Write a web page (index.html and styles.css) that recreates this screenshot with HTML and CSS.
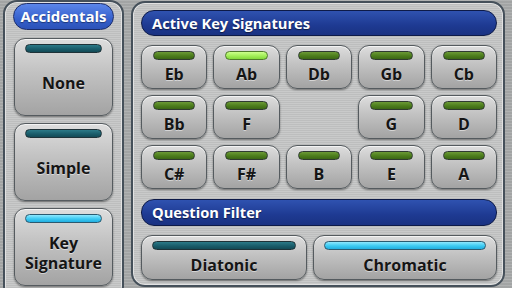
FILE: index.html
```html
<!DOCTYPE html>
<html lang="en">
<head>
    <meta charset="UTF-8">
    <title>Key Signatures</title>
    <link rel="stylesheet" href="styles.css">
</head>
<body>
    <div class="screen">
        <div class="panel left">
            <div class="pill">Accidentals</div>
            <button class="btn tall"><span class="bar teal"></span><span class="label">None</span></button>
            <button class="btn tall"><span class="bar teal"></span><span class="label">Simple</span></button>
            <button class="btn tall"><span class="bar cyan"></span><span class="label">Key<br>Signature</span></button>
        </div>

        <div class="panel right">
            <div class="header">Active Key Signatures</div>
            <div class="keys">
                <button class="btn key"><span class="bar green"></span><span class="label">Eb</span></button>
                <button class="btn key"><span class="bar lime"></span><span class="label">Ab</span></button>
                <button class="btn key"><span class="bar green"></span><span class="label">Db</span></button>
                <button class="btn key"><span class="bar green"></span><span class="label">Gb</span></button>
                <button class="btn key"><span class="bar green"></span><span class="label">Cb</span></button>

                <button class="btn key"><span class="bar green"></span><span class="label">Bb</span></button>
                <button class="btn key"><span class="bar green"></span><span class="label">F</span></button>
                <div class="empty"></div>
                <button class="btn key"><span class="bar green"></span><span class="label">G</span></button>
                <button class="btn key"><span class="bar green"></span><span class="label">D</span></button>

                <button class="btn key"><span class="bar green"></span><span class="label">C#</span></button>
                <button class="btn key"><span class="bar green"></span><span class="label">F#</span></button>
                <button class="btn key"><span class="bar green"></span><span class="label">B</span></button>
                <button class="btn key"><span class="bar green"></span><span class="label">E</span></button>
                <button class="btn key"><span class="bar green"></span><span class="label">A</span></button>
            </div>
            <div class="header filter">Question Filter</div>
            <div class="filters">
                <button class="btn wide diatonic"><span class="bar teal"></span><span class="label">Diatonic</span></button>
                <button class="btn wide"><span class="bar cyan"></span><span class="label">Chromatic</span></button>
            </div>
        </div>
    </div>
</body>
</html>
```

FILE: styles.css
```css
body {
    margin: 0;
    width: 512px;
    height: 288px;
    overflow: hidden;
    font-family: "Open Sans", "DejaVu Sans", sans-serif;
    background: #a9abab repeating-linear-gradient(180deg, rgba(255,255,255,0.08) 0 1px, rgba(0,0,0,0.04) 1px 3px);
}
.screen {
    display: flex;
    gap: 7px;
    padding: 0 7px 0 3px;
}
.panel {
    border: 2px solid #45505a;
    border-radius: 14px;
    background: #c3c4c4 repeating-linear-gradient(180deg, rgba(255,255,255,0.1) 0 1px, rgba(0,0,0,0.03) 1px 2px);
    box-shadow: inset 0 0 0 1px #e2e2e2;
    box-sizing: border-box;
}
.left {
    width: 121px;
    height: 300px;
    padding: 1px 8px 0 8px;
    display: flex;
    flex-direction: column;
    gap: 7px;
}
.right {
    width: 374px;
    height: 286px;
    margin-top: 1px;
    padding: 7px 6px 0 8px;
}
.pill {
    height: 27px;
    margin: 0 0 1px;
    border: 1px solid #1c2d6a;
    border-radius: 14px;
    background: linear-gradient(#5b86ea, #3560cc 60%, #2c52b8);
    color: #fff;
    font-size: 15px;
    font-weight: 700;
    line-height: 25px;
    text-align: center;
    box-sizing: border-box;
    text-shadow: 0 1px 1px rgba(0,0,0,0.4);
}
.header {
    height: 26px;
    border: 1px solid #0d1a48;
    border-radius: 13px;
    background: linear-gradient(#2f52b0, #1e3a92 60%, #1a3282);
    color: #fff;
    font-size: 14.7px;
    font-weight: 700;
    line-height: 24px;
    padding-left: 10px;
    box-sizing: border-box;
    text-shadow: 0 1px 1px rgba(0,0,0,0.5);
}
.header.filter {
    height: 27px;
    margin-top: 10px;
}
.btn {
    display: flex;
    flex-direction: column;
    align-items: center;
    padding: 5px 10px 0;
    border: 1px solid #555b5f;
    border-radius: 11px;
    background: linear-gradient(#dedede, #c4c4c4 40%, #a3a3a3);
    box-shadow: 0 1px 2px rgba(0,0,0,0.45), inset 0 1px 0 #f4f4f4;
    box-sizing: border-box;
    font-family: inherit;
    color: #151515;
}
.label {
    flex: 1;
    display: flex;
    align-items: center;
    justify-content: center;
    font-weight: 700;
    font-size: 16px;
    line-height: 20px;
    text-shadow: 0 1px 0 rgba(255,255,255,0.5);
}
.bar {
    width: 100%;
    height: 9px;
    border-radius: 5px;
    border: 1px solid #2f3a30;
    box-sizing: border-box;
}
.bar.green { background: linear-gradient(#6c9a36, #4c7d1c 55%, #3c6614); }
.bar.lime { background: linear-gradient(#ccff8c, #a2ee58 55%, #84d83c); border-color: #4e7a2a; }
.bar.teal { background: linear-gradient(#2c7a88, #1a5d6b 55%, #134a56); border-color: #1e3238; }
.bar.cyan { background: linear-gradient(#8ee8ff, #3ccaf2 55%, #22aee0); border-color: #2a5a70; }
.tall {
    height: 78px;
    width: 99px;
    margin: 0 auto;
}
.tall .label { padding-bottom: 2px; }
.keys {
    display: grid;
    grid-template-columns: repeat(5, 1fr);
    grid-auto-rows: 44px;
    gap: 6px;
    margin-top: 9px;
}
.key { padding: 5px 11px 1px; }
.filters {
    display: flex;
    gap: 6px;
    margin-top: 9px;
}
.wide {
    flex: 1;
    height: 45px;
}
.wide.diatonic { flex: none; width: 166px; }
```
